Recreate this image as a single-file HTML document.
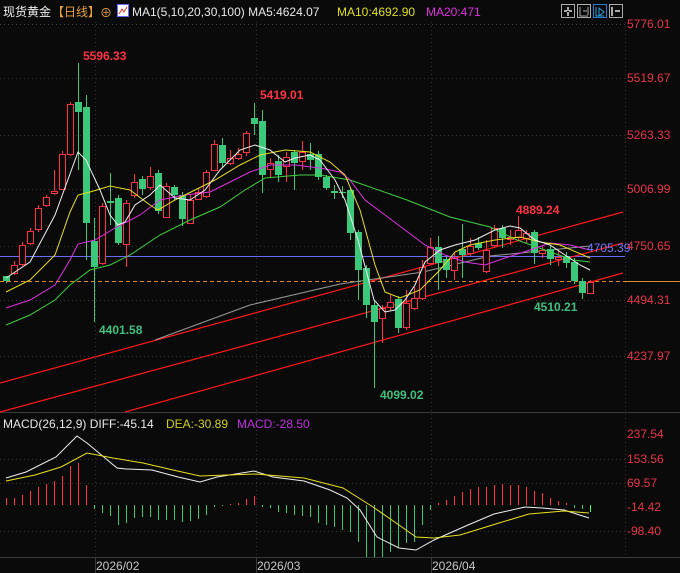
<!DOCTYPE html>
<html><head><meta charset="utf-8"><style>
html,body{margin:0;padding:0;background:#0a0a0a;width:680px;height:573px;overflow:hidden}
svg{display:block}
text{font-family:"Liberation Sans","Noto Sans CJK SC",sans-serif}
</style></head><body>
<svg id="s" width="680" height="573" viewBox="0 0 680 573" xmlns="http://www.w3.org/2000/svg">
<rect width="680" height="573" fill="#0a0a0a"/>
<g stroke="#333" stroke-width="1" stroke-dasharray="1,3">
<line x1="0" y1="78.5" x2="625" y2="78.5"/><line x1="0" y1="135.5" x2="625" y2="135.5"/>
<line x1="0" y1="189.5" x2="625" y2="189.5"/><line x1="0" y1="246.5" x2="625" y2="246.5"/>
<line x1="0" y1="300.5" x2="625" y2="300.5"/><line x1="0" y1="356.5" x2="625" y2="356.5"/>
<line x1="0" y1="459.5" x2="625" y2="459.5"/><line x1="0" y1="483.5" x2="625" y2="483.5"/>
<line x1="0" y1="531.5" x2="625" y2="531.5"/>
<line x1="95.5" y1="22" x2="95.5" y2="557"/><line x1="256.5" y1="22" x2="256.5" y2="557"/>
<line x1="431.5" y1="22" x2="431.5" y2="557"/><line x1="625.5" y1="22" x2="625.5" y2="557"/>
<line x1="0" y1="24.5" x2="625" y2="24.5" stroke="#444"/>
</g>
<line x1="0" y1="412.5" x2="680" y2="412.5" stroke="#3a3a3a"/>
<line x1="0" y1="557.5" x2="680" y2="557.5" stroke="#3a3a3a"/>
<g stroke="#3a3a3a"><line x1="95.5" y1="557" x2="95.5" y2="573"/><line x1="256.5" y1="557" x2="256.5" y2="573"/><line x1="431.5" y1="557" x2="431.5" y2="573"/></g>
<line x1="0" y1="256.5" x2="625" y2="256.5" stroke="#6a6aff"/>
<line x1="0" y1="281.5" x2="625" y2="281.5" stroke="#e08a30" stroke-dasharray="4,3"/>
<line x1="625" y1="281.5" x2="680" y2="281.5" stroke="#e08a30"/>
<g stroke="#ff1a1a" stroke-width="1.2">
<line x1="0" y1="383" x2="623" y2="212"/>
<line x1="0" y1="412" x2="623" y2="243"/>
<line x1="125" y1="412" x2="623" y2="273"/>
</g>
<polyline fill="none" stroke="#999" points="155,340 250,305 340,284 423,272 490,256 580,247 590,246"/>
<g id="cd"></g>
<g fill="none" stroke-width="1">
<polyline stroke="#40d040" points="6,325 30,315 55,300 70,285 90,270 110,265 130,255 160,235 190,220 220,207 245,190 265,178 300,175 320,175 350,180 407,200 450,217 490,227 517,240 573,260 590,262"/>
<polyline stroke="#e030e0" points="6,308 30,300 55,285 70,260 78,244 95,240 115,228 140,215 160,200 185,195 210,192 230,182 250,172 270,165 295,165 320,168 340,172 350,180 365,200 385,215 405,230 425,245 445,255 465,262 485,265 505,258 530,250 550,243 570,245 590,250"/>
<polyline stroke="#e8e020" points="6,292 30,280 55,255 70,212 78,195 90,192 110,186 130,190 150,205 158,210 175,200 195,190 215,180 240,165 260,155 285,150 310,152 330,162 345,175 360,210 375,265 385,292 400,298 420,290 440,270 455,252 470,245 495,240 520,237 540,242 560,245 590,258"/>
<polyline stroke="#f0f0f0" points="6,278 30,262 55,215 78,152 86,160 100,190 110,215 118,225 125,222 135,205 150,195 160,185 175,198 190,200 205,190 220,170 240,150 255,145 270,150 285,162 295,158 310,155 320,160 335,180 345,200 358,240 366,270 374,300 385,312 395,310 405,300 415,285 425,262 440,250 455,245 475,240 495,230 510,226 520,228 535,240 550,245 565,255 580,265 590,270"/>
</g>
<g id="mb"></g>
<polyline fill="none" stroke="#f0f0f0" points="6,478 26,472 56,457 77,436 87,443 117,468 126,469 152,470 178,477 200,482 217,477 254,471 273,477 304,481 330,490 347,498 360,510 377,537 399,548 416,550 434,540 468,525 494,514 525,507 542,508 564,510 589,518"/>
<polyline fill="none" stroke="#e8e020" points="6,481 35,475 61,467 87,453 113,458 143,463 173,470 200,476 256,474 304,478 343,488 373,507 399,525 416,537 434,538 460,535 499,523 529,514 564,511 589,513"/>
<g font-size="12" font-weight="bold">
<text x="83" y="60" fill="#ff3344">5596.33</text>
<text x="260" y="99" fill="#ff3344">5419.01</text>
<text x="99" y="334" fill="#40c080">4401.58</text>
<text x="380" y="399" fill="#40c080">4099.02</text>
<text x="516" y="214" fill="#ff3344">4889.24</text>
<text x="534" y="311" fill="#40c080">4510.21</text>
</g>
<text x="587" y="252" font-size="12" fill="#7878ff">4705.39</text>
<g font-size="12" fill="#e8354a">
<text x="627" y="28">5776.01</text><text x="627" y="82">5519.67</text><text x="627" y="139">5263.33</text>
<text x="627" y="193">5006.99</text><text x="627" y="250">4750.65</text><text x="627" y="304">4494.31</text>
<text x="627" y="360">4237.97</text>
<text x="627" y="438">237.54</text><text x="627" y="463">153.56</text><text x="627" y="487">69.57</text>
<text x="627" y="511">-14.42</text><text x="627" y="535">-98.40</text>
</g>
<g font-size="12" fill="#c8c8c8">
<text x="96" y="570">2026/02</text><text x="257" y="570">2026/03</text><text x="432" y="570">2026/04</text>
</g>
<g font-size="12">
<text x="3" y="16" fill="#f0f0f0">现货黄金</text>
<text x="52" y="16" fill="#e8a040">【日线】</text>
<text x="100" y="17" fill="#e8a040">⊕</text>
<rect x="117.5" y="4.5" width="11" height="12" fill="#fff" stroke="#66f"/>
<polyline points="119,14 122,9 124,12 127,7" fill="none" stroke="#e03030"/>
<text x="132" y="16" fill="#e8e8e8">MA1(5,10,20,30,100) MA5:4624.07</text>
<text x="337" y="16" fill="#e0e020">MA10:4692.90</text>
<text x="426" y="16" fill="#e030e0">MA20:471</text>
<text x="3" y="428" fill="#e8e8e8">MACD(26,12,9) DIFF:-45.14</text>
<text x="166" y="428" fill="#d0d020">DEA:-30.89</text>
<text x="237" y="428" fill="#c030e0">MACD:-28.50</text>
</g>
<g fill="none" stroke="#aaa">
<rect x="561.5" y="4.5" width="13" height="13"/><rect x="577.5" y="4.5" width="13" height="13"/>
<rect x="593.5" y="4.5" width="13" height="13" stroke="#2a7fd0"/><rect x="609.5" y="4.5" width="13" height="13"/>
<path d="M568 7v4M568 12v4M564 11h3M569 11h3" stroke-width="2"/>
<path d="M580 7v9h8M588 7v8M583 11h4"/>
<path d="M596 7v9h8M599 8l5 4-5 4z" stroke="#2a9fe0"/>
<path d="M612 7v9M615 11h5" stroke-width="2"/>
</g>
</svg>
<script>
var C=[[6,276,281,276,283,0],[14,265,273,261,275,1],[22,245,264,242,266,1],[30,231,243,228,245,1],[38,208,229,205,232,1],[46,197,205,195,207,1],[54,191,193,170,195,1],[62,154,189,151,190,1],[70,104,154,102,156,1],[78,102,112,63,170,0],[86,107,223,95,260,0],[94,241,267,218,322,0],[102,206,263,203,265,1],[110,201,203,173,225,0],[118,198,243,195,245,0],[126,203,244,200,267,1],[134,182,195,174,198,1],[142,179,189,176,195,0],[150,176,187,167,190,1],[158,173,211,170,214,0],[166,186,217,183,218,1],[174,187,195,185,200,0],[182,195,219,192,226,0],[190,200,223,195,224,1],[198,192,199,188,200,1],[206,172,196,170,198,1],[214,144,170,140,171,1],[222,145,163,138,168,0],[230,158,163,150,165,1],[238,154,158,148,160,1],[246,133,152,131,156,1],[254,118,124,103,135,0],[262,121,175,110,193,0],[270,163,169,158,177,1],[278,161,175,155,182,0],[286,157,166,152,182,1],[294,152,163,150,190,0],[302,152,161,141,170,1],[310,154,160,143,170,0],[318,154,177,151,180,0],[326,177,188,175,190,0],[334,191,193,185,199,0],[342,192,193,186,198,0],[350,190,233,188,240,0],[358,232,270,230,300,0],[366,268,305,265,318,0],[374,305,322,300,388,0],[382,308,318,305,343,1],[390,302,307,295,310,1],[398,299,328,296,333,0],[406,303,327,290,330,1],[414,298,308,287,310,1],[422,267,298,260,300,1],[430,247,263,238,265,1],[438,247,263,236,290,0],[446,259,270,255,278,0],[454,258,270,252,280,1],[462,249,255,224,278,0],[470,246,253,238,256,1],[478,243,248,237,250,0],[486,250,271,240,273,1],[494,228,245,225,248,1],[502,228,238,225,248,0],[510,237,239,230,245,1],[518,230,237,216,240,1],[526,233,238,230,243,1],[534,232,253,230,264,0],[542,250,253,245,258,1],[550,249,259,245,265,0],[558,257,259,250,266,1],[566,256,263,252,268,0],[574,262,281,258,284,0],[582,281,293,278,299,0],[590,282,293,280,294,1]];
var h='';C.forEach(function(c){var col=c[5]?'#ff3344':'#3cc87a';var x=c[0];h+='<line x1="'+(x+.5)+'" y1="'+c[3]+'" x2="'+(x+.5)+'" y2="'+c[4]+'" stroke="'+col+'"/>';var ht=Math.max(1,c[2]-c[1]);if(c[5])h+='<rect x="'+(x-2.5)+'" y="'+(c[1]+.5)+'" width="6" height="'+ht+'" fill="#0a0a0a" stroke="'+col+'"/>';else h+='<rect x="'+(x-3)+'" y="'+c[1]+'" width="7" height="'+ht+'" fill="'+col+'"/>';});
document.getElementById('cd').innerHTML=h;
var B=[498,498,495,491,487,484,481,476,466,463,485,509,513,516,525,523,518,517,517,520,520,520,522,521,519,515,507,506,504,503,499,496,507,508,512,513,515,516,517,523,525,527,530,532,542,557,557,557,552,547,543,542,525,510,503,500,496,492,489,487,487,485,484,485,485,487,491,493,498,501,503,508,509,512];
var g='';B.forEach(function(v,i){var x=6+8*i+.5;var col=v<505?'#ff3344':'#3cc87a';if(i==73)col='#40ff60';g+='<line x1="'+x+'" y1="505" x2="'+x+'" y2="'+v+'" stroke="'+col+'"/>';});
document.getElementById('mb').innerHTML=g;
</script>
</body></html>
